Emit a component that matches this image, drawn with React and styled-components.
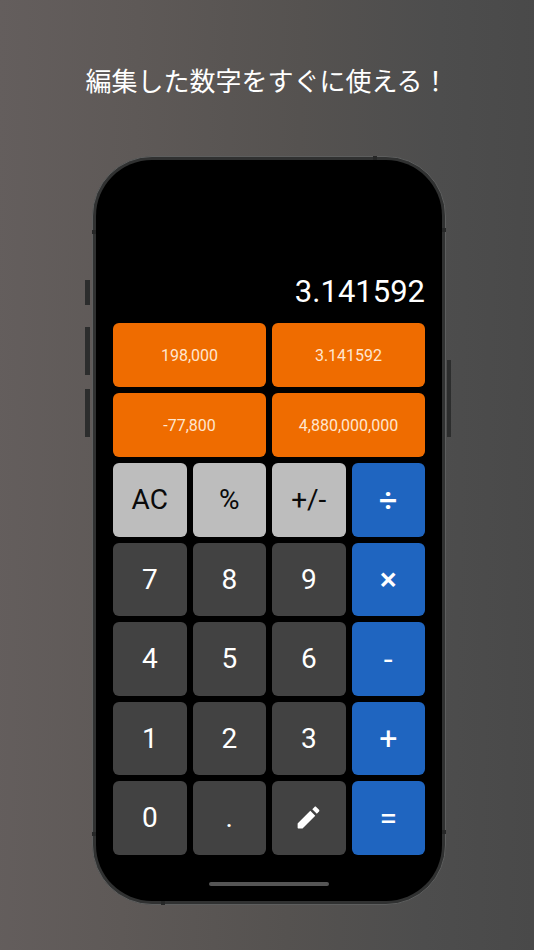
import React from 'react';
import styled, { createGlobalStyle } from 'styled-components';

const GlobalStyle = createGlobalStyle`
  * {
    box-sizing: border-box;
  }
  body {
    margin: 0;
    background: #4b4b4b;
    font-family: Roboto, 'Noto Sans CJK JP', sans-serif;
  }
`;

const Page = styled.main`
  min-height: 100vh;
  padding: 60px 24px 45px;
  display: flex;
  flex-direction: column;
  align-items: center;
  background: linear-gradient(
    91deg,
    #645e5d 0%,
    #5e5957 25%,
    #555250 55%,
    #4d4d4d 80%,
    #494949 100%
  );
`;

const Title = styled.h1`
  margin: 0 0 56px;
  color: #fff;
  font-family: 'Noto Sans CJK JP', sans-serif;
  font-size: 26px;
  font-weight: 400;
  line-height: 40px;
  text-align: center;
`;

const Device = styled.div`
  width: 100%;
  max-width: 368px;
  padding-left: 2px;
  display: flex;
`;

const SideKeys = styled.div`
  flex: none;
  width: ${(props) => (props.$right ? '5px' : '7px')};
  padding-top: ${(props) => (props.$right ? '204px' : '124px')};
  display: flex;
  flex-direction: column;
  align-items: ${(props) => (props.$right ? 'flex-end' : 'flex-start')};
  gap: 14px;
`;

const SideKey = styled.span`
  width: ${(props) => (props.$thin ? '4px' : '5px')};
  height: ${(props) => props.$length};
  margin-bottom: ${(props) => props.$after || '0'};
  background: #2c2d2d;
`;

const Frame = styled.div`
  position: relative;
  flex: 1;
  min-width: 0;
  padding: 3px;
  border: 1px solid #5d5e5e;
  border-radius: 60px;
  background: #303131;
`;

// dark seams where the antenna bands cross the frame
const Band = styled.span`
  position: absolute;
  width: 4px;
  height: 4px;
  background: #262727;
`;

const TopBand = styled(Band)`
  top: -1px;
  right: 68px;
`;

const BottomBand = styled(Band)`
  bottom: -1px;
  left: 68px;
`;

const LeftBand = styled(Band)`
  left: -1px;
  ${(props) => (props.$low ? 'bottom: 68px;' : 'top: 73px;')}
`;

const RightBand = styled(Band)`
  right: -1px;
  ${(props) => (props.$low ? 'bottom: 70px;' : 'top: 71px;')}
`;

const Screen = styled.div`
  padding: 111px 17px 15px;
  border-radius: 56px;
  background: #000;
  display: flex;
  flex-direction: column;
`;

const Display = styled.output`
  margin-bottom: 11px;
  color: #fff;
  font-size: 31px;
  line-height: 41px;
  text-align: right;
`;

const Keypad = styled.div`
  display: grid;
  grid-template-columns: repeat(4, 1fr);
  gap: 6px;
`;

const Button = styled.button`
  padding: 0;
  border: 0;
  border-radius: 6px;
  display: flex;
  align-items: center;
  justify-content: center;
  font-family: inherit;
  cursor: pointer;
`;

const MemoryKey = styled(Button)`
  grid-column: span 2;
  height: 64px;
  background: #ef6c00;
  color: #ffe6cf;
  font-size: 16px;
`;

const Key = styled(Button)`
  aspect-ratio: 1;
  background: #424242;
  color: #fff;
  font-size: 28px;
`;

const ActionKey = styled(Key)`
  background: #bdbdbd;
  color: #0a0a0a;
`;

const OperatorKey = styled(Key)`
  background: #1f65c0;
  font-size: 32px;
  line-height: 36px;
`;

const SignKey = styled(OperatorKey)`
  font-weight: 500;
`;

const HomeIndicator = styled.div`
  width: 120px;
  max-width: 50%;
  height: 4px;
  margin: 27px auto 0;
  border-radius: 2px;
  background: #555;
`;

const memory = ['198,000', '3.141592', '-77,800', '4,880,000,000'];

const keys = [
  ['AC', ActionKey],
  ['%', ActionKey],
  ['+/-', ActionKey],
  ['÷', SignKey],
  ['7', Key],
  ['8', Key],
  ['9', Key],
  ['×', SignKey],
  ['4', Key],
  ['5', Key],
  ['6', Key],
  ['-', OperatorKey],
  ['1', Key],
  ['2', Key],
  ['3', Key],
  ['+', OperatorKey],
  ['0', Key],
  ['.', Key],
  ['edit', Key],
  ['=', OperatorKey],
];

function PencilIcon() {
  return (
    <svg width="29" height="29" viewBox="0 0 24 24" fill="currentColor">
      <path d="M3 17.1v3.4c0 .28.22.5.5.5h3.4c.13 0 .26-.05.35-.15L17.6 10.5l-4.1-4.1L3.15 16.75c-.1.1-.15.22-.15.35zM20.71 7.04c.39-.39.39-1.02 0-1.41l-2.34-2.34c-.39-.39-1.02-.39-1.41 0l-1.83 1.83 3.75 3.75 1.83-1.83z" />
    </svg>
  );
}

function Calculator() {
  return (
    <Screen>
      <Display>3.141592</Display>
      <Keypad>
        {memory.map((value) => (
          <MemoryKey key={value} type="button">
            {value}
          </MemoryKey>
        ))}
        {keys.map(([label, KeyType]) =>
          label === 'edit' ? (
            <KeyType key={label} type="button" aria-label="編集">
              <PencilIcon />
            </KeyType>
          ) : (
            <KeyType key={label} type="button">
              {label}
            </KeyType>
          )
        )}
      </Keypad>
      <HomeIndicator />
    </Screen>
  );
}

function App() {
  return (
    <>
      <GlobalStyle />
      <Page>
        <Title>編集した数字をすぐに使える！</Title>
        <Device>
          <SideKeys>
            <SideKey $length="25px" $after="8px" />
            <SideKey $length="48px" />
            <SideKey $length="48px" />
          </SideKeys>
          <Frame>
            <TopBand />
            <BottomBand />
            <LeftBand />
            <LeftBand $low />
            <RightBand />
            <RightBand $low />
            <Calculator />
          </Frame>
          <SideKeys $right>
            <SideKey $thin $length="77px" />
          </SideKeys>
        </Device>
      </Page>
    </>
  );
}

export default App;
